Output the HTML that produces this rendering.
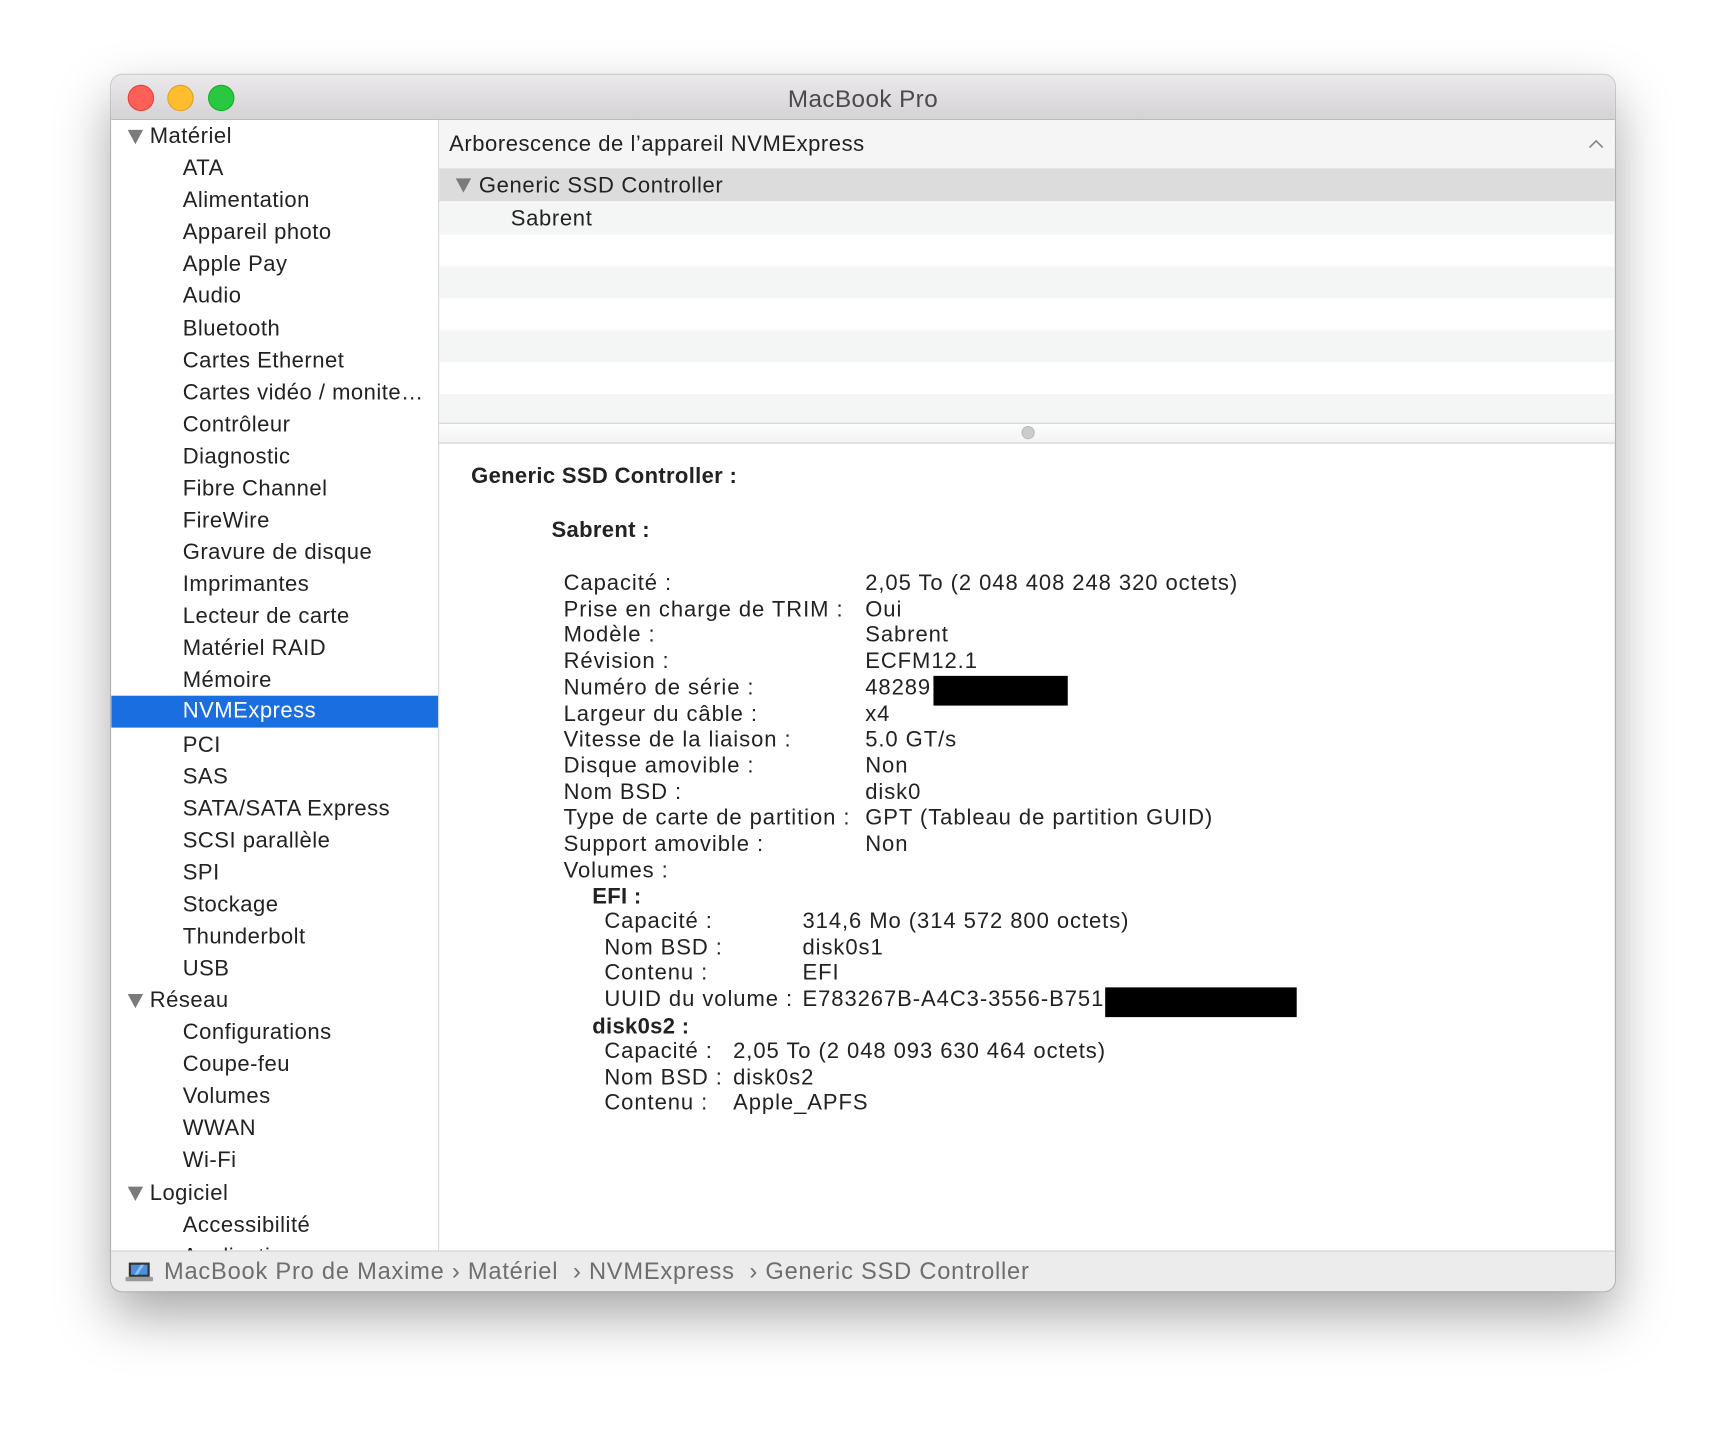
<!DOCTYPE html>
<html><head><meta charset="utf-8"><style>
html,body{margin:0;padding:0;width:1726px;height:1440px;overflow:hidden;background:#fff;}
#s{position:absolute;left:0;top:0;width:1568px;height:1309px;transform:scale(1.10077);transform-origin:0 0;font-family:"Liberation Sans",sans-serif;color:#222;}
.win{position:absolute;left:101px;top:68px;width:1366px;height:1105px;border-radius:10px;overflow:hidden;background:#fff;box-shadow:0 22px 50px rgba(0,0,0,.35),0 0 0 1px rgba(0,0,0,.18);}
.tb{position:absolute;left:0;top:0;width:100%;height:40px;background:linear-gradient(#ebe9eb,#d4d2d4);border-bottom:1px solid #b9b9b9;}
.tb .t{position:absolute;left:0;right:0;top:9px;text-align:center;font-size:22px;color:#4a4a4a;letter-spacing:0.4px;}
.dot{position:absolute;top:9px;width:22px;height:22px;border-radius:50%;}
.side{position:absolute;left:0;top:41px;width:297px;height:1027px;background:#fff;border-right:1px solid #d5d5d5;overflow:hidden;}
.r{position:absolute;left:0;width:297px;height:29px;line-height:29px;font-size:20px;letter-spacing:0.45px;white-space:nowrap;}
.r.c{padding-left:65px;width:232px;}
.r.h{padding-left:35px;width:262px;}
.tri{position:absolute;width:0;height:0;border-left:7.5px solid transparent;border-right:7.5px solid transparent;border-top:13px solid #7b7b7b;}
.r.h .tri{left:15px;top:8px;}
.sel{background:#1b6ee0;color:#fff;}
.main{position:absolute;left:298px;top:41px;width:1068px;height:1027px;}
.sb{position:absolute;left:0;top:1068px;width:100%;height:37px;background:#ececec;border-top:1px solid #d0d0d0;}
.sb .t{position:absolute;left:48px;top:6px;font-size:21.5px;color:#6e6e6e;white-space:nowrap;letter-spacing:0.7px;}
.d{position:absolute;font-size:20px;letter-spacing:0.85px;white-space:nowrap;line-height:24px;}
b{font-weight:bold;letter-spacing:0.3px;}
</style></head><body><div id="s">
<div class="win">
 <div class="tb"><div class="dot" style="left:15px;background:#fe5f57;border:0.5px solid #e0443e"></div><div class="dot" style="left:51px;background:#febc2e;border:0.5px solid #dea123"></div><div class="dot" style="left:88px;background:#28c840;border:0.5px solid #1aab29"></div><div class="t">MacBook Pro</div></div>
 <div class="side">
  <div class="r h" style="top:1px"><span class="tri"></span>Matériel</div>
  <div class="r c" style="top:30px">ATA</div>
  <div class="r c" style="top:59px">Alimentation</div>
  <div class="r c" style="top:88px">Appareil photo</div>
  <div class="r c" style="top:117px">Apple Pay</div>
  <div class="r c" style="top:146px">Audio</div>
  <div class="r c" style="top:176px">Bluetooth</div>
  <div class="r c" style="top:205px">Cartes Ethernet</div>
  <div class="r c" style="top:234px">Cartes vidéo / monite…</div>
  <div class="r c" style="top:263px">Contrôleur</div>
  <div class="r c" style="top:292px">Diagnostic</div>
  <div class="r c" style="top:321px">Fibre Channel</div>
  <div class="r c" style="top:350px">FireWire</div>
  <div class="r c" style="top:379px">Gravure de disque</div>
  <div class="r c" style="top:408px">Imprimantes</div>
  <div class="r c" style="top:437px">Lecteur de carte</div>
  <div class="r c" style="top:466px">Matériel RAID</div>
  <div class="r c" style="top:495px">Mémoire</div>
  <div class="r c sel" style="top:523px">NVMExpress</div>
  <div class="r c" style="top:554px">PCI</div>
  <div class="r c" style="top:583px">SAS</div>
  <div class="r c" style="top:612px">SATA/SATA Express</div>
  <div class="r c" style="top:641px">SCSI parallèle</div>
  <div class="r c" style="top:670px">SPI</div>
  <div class="r c" style="top:699px">Stockage</div>
  <div class="r c" style="top:728px">Thunderbolt</div>
  <div class="r c" style="top:757px">USB</div>
  <div class="r h" style="top:786px"><span class="tri"></span>Réseau</div>
  <div class="r c" style="top:815px">Configurations</div>
  <div class="r c" style="top:844px">Coupe-feu</div>
  <div class="r c" style="top:873px">Volumes</div>
  <div class="r c" style="top:902px">WWAN</div>
  <div class="r c" style="top:931px">Wi-Fi</div>
  <div class="r h" style="top:961px"><span class="tri"></span>Logiciel</div>
  <div class="r c" style="top:990px">Accessibilité</div>
  <div class="r c" style="top:1019px">Applications</div>
 </div>
 <div class="main">
  <div style="position:absolute;left:0;top:0;width:100%;height:44px;background:#f5f5f5;border-bottom:2px solid #dadada"></div>
  <div class="d" style="left:9px;top:10px;letter-spacing:0.5px">Arborescence de l’appareil NVMExpress</div>
  <svg style="position:absolute;left:1044px;top:17px" width="14" height="9"><path d="M1 8 L7 2 L13 8" fill="none" stroke="#888" stroke-width="1.5"/></svg>
  <div style="position:absolute;left:0;top:46px;width:100%;height:28px;background:#dcdcdc"></div>
  <span class="tri" style="left:15px;top:53px"></span>
  <div class="d" style="left:36px;top:48px;letter-spacing:0.6px">Generic SSD Controller</div>
  <div style="position:absolute;left:0;top:75px;width:100%;height:29px;background:#f4f5f5"></div>
  <div class="d" style="left:65px;top:78px;letter-spacing:0.6px">Sabrent</div>
  <div style="position:absolute;left:0;top:133px;width:100%;height:29px;background:#f4f5f5"></div>
  <div style="position:absolute;left:0;top:191px;width:100%;height:29px;background:#f4f5f5"></div>
  <div style="position:absolute;left:0;top:249px;width:100%;height:26px;background:#f4f5f5"></div>
  <div style="position:absolute;left:0;top:275px;width:100%;height:17px;background:linear-gradient(#fdfdfd,#f3f3f3);border-top:1px solid #d0d0d0;border-bottom:1px solid #d0d0d0"></div>
  <div style="position:absolute;left:529px;top:278px;width:10px;height:10px;border-radius:50%;background:#ccc;border:1px solid #bbb"></div>
  <div class="d" style="left:29px;top:312px"><b>Generic SSD Controller :</b></div>
  <div class="d" style="left:102px;top:361px"><b>Sabrent :</b></div>
  <div class="d" style="left:113px;top:410px;line-height:23.7px">Capacité :<br>Prise en charge de TRIM :<br>Modèle :<br>Révision :<br>Numéro de série :<br>Largeur du câble :<br>Vitesse de la liaison :<br>Disque amovible :<br>Nom BSD :<br>Type de carte de partition :<br>Support amovible :<br>Volumes :</div>
  <div class="d" style="left:387px;top:410px;line-height:23.7px">2,05 To (2 048 408 248 320 octets)<br>Oui<br>Sabrent<br>ECFM12.1<br>48289<br>x4<br>5.0 GT/s<br>Non<br>disk0<br>GPT (Tableau de partition GUID)<br>Non</div>
  <div class="d" style="left:139px;top:694px"><b>EFI :</b></div>
  <div class="d" style="left:150px;top:717px;line-height:23.7px">Capacité :<br>Nom BSD :<br>Contenu :<br>UUID du volume :</div>
  <div class="d" style="left:330px;top:717px;line-height:23.7px">314,6 Mo (314 572 800 octets)<br>disk0s1<br>EFI<br>E783267B-A4C3-3556-B751</div>
  <div class="d" style="left:139px;top:812px"><b>disk0s2 :</b></div>
  <div class="d" style="left:150px;top:835px;line-height:23.7px">Capacité :<br>Nom BSD :<br>Contenu :</div>
  <div class="d" style="left:267px;top:835px;line-height:23.7px">2,05 To (2 048 093 630 464 octets)<br>disk0s2<br>Apple_APFS</div>
  <div style="position:absolute;left:449px;top:505px;width:122px;height:27px;background:#000"></div>
  <div style="position:absolute;left:605px;top:788px;width:174px;height:27px;background:#000"></div>
 </div>
 <div class="sb">
  <svg style="position:absolute;left:13px;top:9px" width="25" height="19"><rect x="3" y="1" width="19" height="13" fill="#333"/><rect x="5" y="3" width="15" height="9" fill="#4a8fe0"/><path d="M8 12 L14 3 L17 3 L11 12Z" fill="#8cc0f5"/><rect x="0" y="14" width="25" height="4" rx="1" fill="#9a9a9a"/></svg>
  <div class="t">MacBook Pro de Maxime › Matériel &nbsp;› NVMExpress &nbsp;› Generic SSD Controller</div>
 </div>
</div>
</div></body></html>
